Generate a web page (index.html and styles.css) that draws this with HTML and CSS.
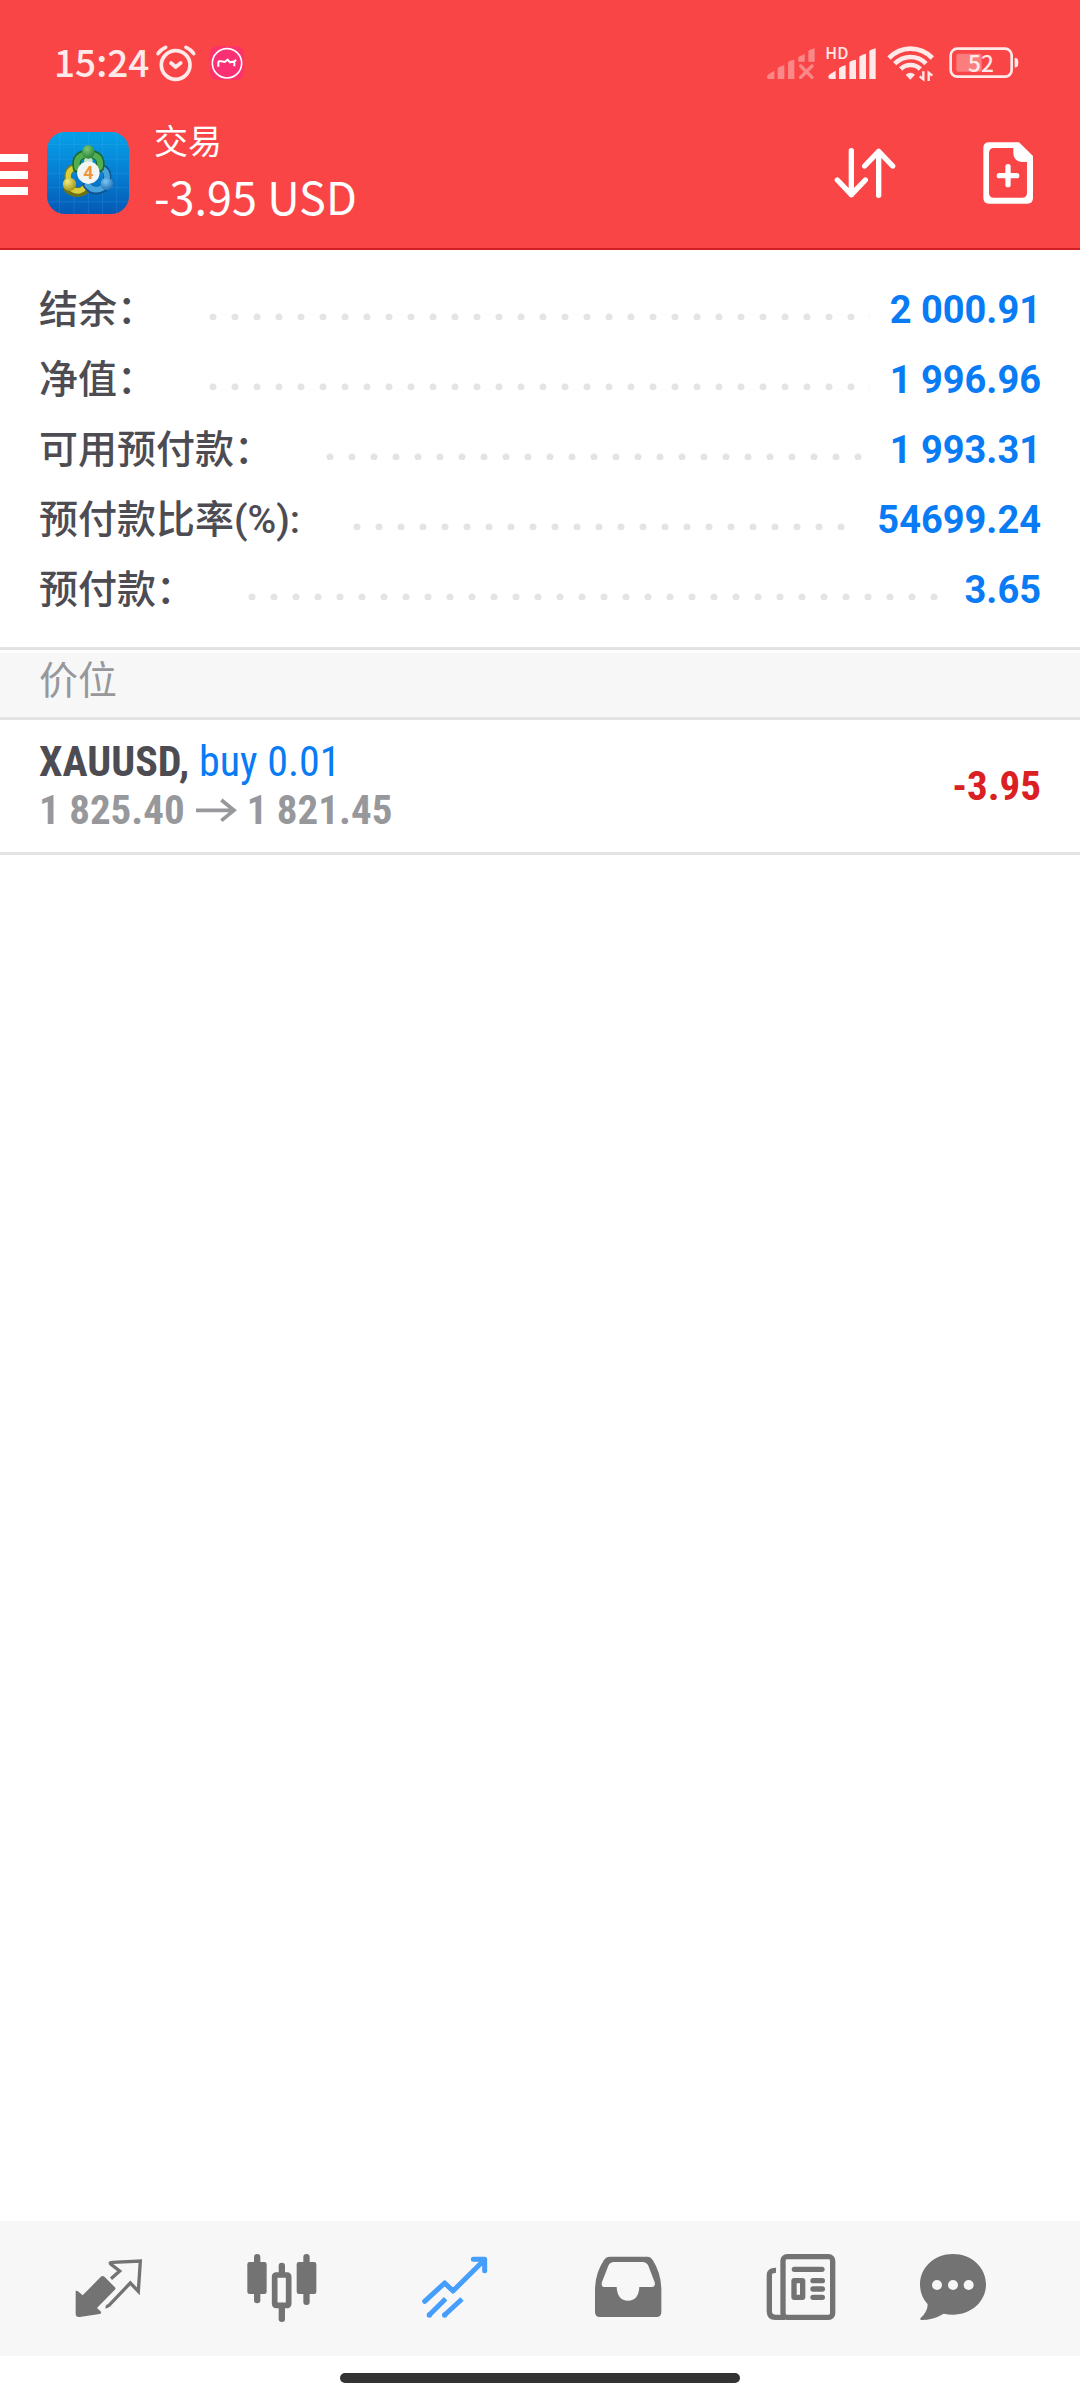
FILE: index.html
```html
<!DOCTYPE html>
<html lang="zh-CN">
<head>
    <meta charset="UTF-8">
    <meta name="viewport" content="width=device-width, initial-scale=1">
    <title>交易</title>
    <link rel="stylesheet" href="styles.css">
</head>
<body>
    <header class="header">
        <!-- 状态栏 -->
        <div class="status-bar">
            <span class="status-time">15:24</span>
            <svg class="status-alarm" viewBox="464 70 126 114" width="42" height="38" fill="none" stroke="#ffe9e9" stroke-width="11" stroke-linecap="round" stroke-linejoin="round">
                <circle cx="526" cy="133" r="43"/>
                <path d="M473 99 Q480 87 496 80M580 99 Q573 87 557 80"/>
                <path d="M512 127 L526 139 L541 127"/>
            </svg>
            <svg class="status-app" viewBox="630 77 102 102" width="34" height="34">
                <rect x="630" y="77" width="102" height="102" rx="22" fill="#fb3368"/>
                <circle cx="681" cy="129" r="44" fill="#fa2f74" stroke="#fff" stroke-width="5"/>
                <path d="M655 139 V126 Q656 121 664 123 L674 125 L683 118 L690 126 L704 123 L708 118 M703 123 V138" fill="none" stroke="#fff" stroke-width="6"/>
            </svg>
            <span class="status-space"></span>
            <div class="status-icons">
                <svg viewBox="82 78 144 102" width="48" height="34" fill="#fff" opacity=".36">
                    <path d="M82 171 Q82 165 88 162 L104 152 V177 H88 Q82 177 82 171ZM114 146 Q115 141 134 136 V177 H114ZM145 128 Q146 122 164 119 V177 H145ZM176 111 L195 102 V125 H176ZM206 94 Q207 90 225 85 V125 H206Z"/>
                    <path d="M183 138 L217 172M217 138 L183 172" stroke="#fff" stroke-width="10" stroke-linecap="round"/>
                </svg>
                <svg viewBox="252 78 156 102" width="52" height="34" fill="#ffe9e9">
                    <text class="hd-text" x="253" y="117">HD</text>
                    <path d="M262 171 Q262 165 268 162 L284 152 V177 H268 Q262 177 262 171ZM294 146 Q295 141 314 136 V177 H294ZM325 128 Q326 122 345 119 V177 H325ZM355 111 Q356 106 375 101 V177 H355ZM385 94 Q386 90 404 85 V177 H385Z"/>
                </svg>
                <svg viewBox="442 76 144 108" width="48" height="36" fill="none" stroke="#ffe9e9" stroke-width="14">
                    <path d="M448 115 Q476 87 512 87 Q550 87 578 115M465 132 Q486 112 512 112 Q540 112 559 132M483 148 Q495 136 512 136 Q530 136 542 148"/>
                    <path d="M498 165 Q512 154 526 165 L512 180Z" fill="#ffe9e9" stroke="none"/>
                    <path d="M551 155 V179 L540 170M567 184 V159 L578 168" stroke-width="7"/>
                </svg>
                <svg class="status-battery" viewBox="625 82 210 96" width="70" height="32">
                    <rect x="630" y="87" width="183" height="84" rx="20" fill="none" stroke="#ffe9e9" stroke-width="8"/>
                    <rect x="647" y="102" width="76" height="54" rx="6" fill="#fff" opacity=".3"/>
                    <path d="M822 114 Q833 114 833 129 Q833 144 822 144Z" fill="#ffe9e9"/>
                    <text class="battery-text" x="721" y="156" text-anchor="middle">52</text>
                </svg>
            </div>
        </div>

        <div class="app-bar">
            <button class="menu-button" type="button" aria-label="菜单">
                <svg viewBox="0 0 28 42" width="28" height="42" fill="#fff">
                    <path d="M0 0H28V8H0ZM0 17H28V25H0ZM0 33H28V41H0Z"/>
                </svg>
            </button>
            <!-- 应用图标 -->
            <svg class="app-logo" viewBox="0 0 248 248" width="82" height="82">
                <defs>
                    <linearGradient id="logo-bg" x1="0" y1="0" x2="0" y2="1">
                        <stop offset="0" stop-color="#06a0e8"/>
                        <stop offset=".5" stop-color="#067fd3"/>
                        <stop offset="1" stop-color="#0558b4"/>
                    </linearGradient>
                    <radialGradient id="logo-green" cx=".4" cy=".3" r=".8">
                        <stop offset="0" stop-color="#7cc975"/>
                        <stop offset="1" stop-color="#1d7a32"/>
                    </radialGradient>
                    <radialGradient id="logo-yellow" cx=".35" cy=".3" r=".8">
                        <stop offset="0" stop-color="#f4ec7c"/>
                        <stop offset="1" stop-color="#968d10"/>
                    </radialGradient>
                    <radialGradient id="logo-blue" cx=".4" cy=".3" r=".8">
                        <stop offset="0" stop-color="#7cc8f4"/>
                        <stop offset="1" stop-color="#1667ae"/>
                    </radialGradient>
                </defs>
                <rect width="248" height="248" rx="54" fill="url(#logo-bg)"/>
                <path d="M38 0V248M82 0V248M125 0V248M168 0V248M211 0V248M0 38H248M0 82H248M0 125H248M0 168H248M0 211H248" stroke="#4fc0ef" stroke-width="2" opacity=".28"/>
                <g fill="none" stroke-linecap="round">
                    <path d="M65 172 Q96 194 122 168" stroke="#6e7217" stroke-width="28"/>
                    <path d="M67 154 Q54 106 92 108" stroke="#7e7a12" stroke-width="22"/>
                    <path d="M67 152 Q55 110 92 108M70 170 Q95 188 114 168" stroke="#d9cf3c" stroke-width="16"/>
                    <path d="M180 154 Q190 112 160 108M120 160 Q140 188 172 170" stroke="#115591" stroke-width="24"/>
                    <path d="M180 152 Q188 115 160 109M122 160 Q142 184 170 168" stroke="#48a4dc" stroke-width="17"/>
                    <path d="M91 110 Q82 67 125 67 Q168 67 160 108" stroke="#166928" stroke-width="26"/>
                    <path d="M91 108 Q84 68 125 68 Q166 68 160 106" stroke="#50ad50" stroke-width="18"/>
                </g>
                <circle cx="125" cy="88" r="13" fill="#c7e6c4"/>
                <ellipse cx="125" cy="60" rx="19" ry="21" fill="url(#logo-green)"/>
                <circle cx="68" cy="158" r="20" fill="url(#logo-yellow)"/>
                <circle cx="181" cy="157" r="19" fill="url(#logo-blue)"/>
                <circle cx="125" cy="123" r="34" fill="#f3f4f4"/>
                <text class="logo-text" x="125" y="142" text-anchor="middle">4</text>
            </svg>
            <div class="app-title">
                <h1 class="title">交易</h1>
                <div class="profit">-3.95 USD</div>
            </div>
            <button class="icon-button" type="button" aria-label="排序">
                <svg viewBox="282 381 186 156" width="62" height="52" fill="none" stroke="#fff" stroke-width="16" stroke-linecap="round" stroke-linejoin="round">
                    <path d="M334 392V524M292 480L334 524L376 480M416 526V394M374 438L416 394L458 438"/>
                </svg>
            </button>
            <button class="icon-button" type="button" aria-label="新订单">
                <svg viewBox="729 366 150 186" width="50" height="62">
                    <path fill="#fff" fill-rule="evenodd" d="M747 367H837L879 408V534Q879 551 862 551H747Q730 551 730 534V384Q730 367 747 367ZM762 384Q747 384 747 400V518Q747 533 762 533H846Q861 533 861 518V426H846Q821 424 820 399V384Z"/>
                    <path d="M804 440V494M778 467H830" stroke="#fff" stroke-width="16" stroke-linecap="round"/>
                </svg>
            </button>
        </div>
    </header>

    <main class="main-content">
        <!-- 账户信息 -->
        <dl class="account">
            <div class="account-row">
                <dt>结余：</dt>
                <dd>2 000.91</dd>
            </div>
            <div class="account-row">
                <dt>净值：</dt>
                <dd>1 996.96</dd>
            </div>
            <div class="account-row">
                <dt>可用预付款：</dt>
                <dd>1 993.31</dd>
            </div>
            <div class="account-row">
                <dt>预付款比率(%):</dt>
                <dd>54699.24</dd>
            </div>
            <div class="account-row">
                <dt>预付款：</dt>
                <dd>3.65</dd>
            </div>
        </dl>

        <!-- 持仓 -->
        <h2 class="section-title">价位</h2>
        <div class="position">
            <div class="position-info">
                <div class="position-symbol"><b>XAUUSD,</b> <span class="buy">buy 0.01</span></div>
                <div class="position-price">
                    <span>1 825.40</span>
                    <svg viewBox="588 500 120 66" width="40" height="22" fill="none" stroke="#97989c" stroke-width="11">
                        <path d="M588 534H702M664 503L702 534L664 565"/>
                    </svg>
                    <span>1 821.45</span>
                </div>
            </div>
            <div class="position-profit">-3.95</div>
        </div>
    </main>

    <!-- 底部导航 -->
    <nav class="tab-bar">
        <button class="tab" type="button" aria-label="行情">
            <svg viewBox="98 126 216 216" width="72" height="72">
                <path d="M106 242L112 243L127 256L181 201Q187 195 193 201L223 231Q228 236 222 241L170 294L182 305Q184 311 178 312L118 321Q106 322 106 312Z" fill="#737373"/>
                <path d="M212 206L238 183L212 163Q206 157 216 157L300 153L294 244L270 219L206 286Q200 291 196 290" fill="none" stroke="#737373" stroke-width="10"/>
            </svg>
        </button>
        <button class="tab" type="button" aria-label="图表">
            <svg viewBox="616 126 216 216" width="72" height="72" fill="#737373">
                <rect x="640" y="132" width="19" height="148" rx="9"/>
                <rect x="620" y="156" width="58" height="96" rx="7"/>
                <rect x="788" y="132" width="19" height="153" rx="9"/>
                <rect x="768" y="156" width="59" height="96" rx="7"/>
                <rect x="714" y="158" width="19" height="40" rx="9"/>
                <rect x="714" y="286" width="19" height="50" rx="9"/>
                <rect x="702" y="195" width="42" height="91" rx="4" fill="none" stroke="#737373" stroke-width="17"/>
            </svg>
        </button>
        <button class="tab" type="button" aria-label="交易">
            <svg viewBox="1135 126 216 216" width="72" height="72" fill="none" stroke="#459dfc" stroke-width="15" stroke-linejoin="round">
                <path d="M1152 274L1212 219L1237 243L1330 151M1298 148H1332V182" stroke-linecap="round"/>
                <path d="M1166 315L1215 266M1212 315L1264 267"/>
                <g fill="#459dfc" stroke="none">
                    <circle cx="1166" cy="315" r="8"/>
                    <circle cx="1212" cy="315" r="8"/>
                </g>
            </svg>
        </button>
        <button class="tab" type="button" aria-label="历史">
            <svg viewBox="154 126 216 216" width="72" height="72">
                <path fill="#737373" fill-rule="evenodd" d="M208 140H320Q330 140 336 150Q362 190 362 240V306Q362 321 347 321H178Q163 321 163 306V240Q163 190 190 150Q196 140 208 140ZM220 156Q208 156 203 167L184 216Q180 231 192 231H228Q230 272 262 272Q294 272 296 231H334Q345 229 342 217L323 167Q317 156 306 156Z"/>
            </svg>
        </button>
        <button class="tab" type="button" aria-label="新闻">
            <svg viewBox="675 126 216 216" width="72" height="72" fill="none" stroke="#737373" stroke-width="16">
                <rect x="729" y="140" width="149" height="182" rx="12"/>
                <path d="M708 181Q688 180 688 196V304Q688 322 706 322H735"/>
                <path d="M763 178H846M819 212H847M819 237H847M819 262H847" stroke-linecap="round"/>
                <rect x="762" y="212" width="26" height="50" rx="1"/>
            </svg>
        </button>
        <button class="tab tab-last" type="button" aria-label="消息">
            <svg viewBox="1131 126 216 216" width="72" height="72">
                <path d="M1239 132C1294 132 1338 172 1338 223C1338 274 1294 314 1239 314Q1224 314 1211 311Q1180 330 1143 330Q1139 328 1142 324Q1163 305 1163 283Q1140 258 1140 223C1140 172 1184 132 1239 132Z" fill="#737373"/>
                <g fill="#f7f7f7">
                    <circle cx="1191" cy="225" r="15"/>
                    <circle cx="1239" cy="225" r="15"/>
                    <circle cx="1286" cy="225" r="15"/>
                </g>
            </svg>
        </button>
    </nav>
    <div class="home-area"><div class="home-line"></div></div>
</body>
</html>
```
FILE: styles.css
```css
body {
    font-family: Roboto, 'Noto Sans CJK SC', sans-serif;
    background-color: #fff;
    margin: 0;
    min-height: 100vh;
    display: flex;
    flex-direction: column;
}

svg {
    display: block;
    flex: none;
    overflow: visible;
}

button {
    background: none;
    border: none;
    padding: 0;
    cursor: pointer;
}

/* 顶部 */
.header {
    background-color: #fa4547;
    border-bottom: 2px solid #d02024;
    color: #fff;
}

.status-bar {
    display: flex;
    align-items: center;
    height: 78px;
    padding: 24px 61px 0 54px;
}

.status-time {
    margin-bottom: 4px;
    font-family: 'Noto Sans CJK SC', sans-serif;
    font-size: 37px;
    font-weight: 500;
    line-height: 40px;
    color: #ffe9e9;
}

.status-alarm {
    margin-left: 6px;
}

.status-app {
    margin-left: 13px;
}

.status-space {
    flex: 1;
}

.status-icons {
    display: flex;
    align-items: center;
    gap: 10px;
}

.status-battery {
    margin-left: 4px;
}

.hd-text {
    font-family: 'Noto Sans CJK SC', sans-serif;
    font-size: 48px;
    font-weight: 500;
}

.battery-text {
    font-family: 'Noto Sans CJK SC', sans-serif;
    font-size: 68px;
    font-weight: 500;
    fill: #ffe9e9;
}

.logo-text {
    font-size: 54px;
    font-weight: 700;
    fill: #f0953c;
}

.app-bar {
    display: flex;
    align-items: center;
    height: 141px;
    padding: 0 47px 5px 0;
}

.menu-button {
    margin-top: 4px;
}

.app-logo {
    margin-left: 19px;
}

.app-title {
    flex: 1;
    margin: 0 0 10px 25px;
    font-family: 'Noto Sans CJK SC', sans-serif;
}

.title {
    font-size: 34px;
    font-weight: 400;
    line-height: 56px;
    margin: 0;
}

.profit {
    font-size: 45px;
    line-height: 56px;
}

.icon-button {
    margin-left: 87px;
}

/* 账户信息 */
.main-content {
    flex: 1;
}

.account {
    margin: 0;
    padding: 25px 39px 22px;
    border-bottom: 3px solid #e3e3e3;
}

.account-row {
    display: flex;
    align-items: center;
    height: 70px;
    font-size: 39px;
    font-weight: 500;
    line-height: 70px;
}

.account-row dt {
    color: #4d4c53;
}

/* 标签和数值之间的圆点 */
.account-row::after {
    content: '';
    order: 1;
    flex: 1;
    height: 7px;
    margin: 12px 20px 0 53px;
    background: radial-gradient(circle at 4px 4px, #e4e4e4 3px, transparent 4px) 0 0 / 22px 7px repeat-x;
}

.account-row dd {
    order: 2;
    margin: 0;
    font-size: 38px;
    font-weight: 700;
    color: #087bf5;
}

/* 持仓 */
.section-title {
    margin: 3px 0 0;
    padding: 0 39px 8px;
    font-size: 39px;
    font-weight: 400;
    line-height: 56px;
    color: #97989c;
    background-color: #f7f7f7;
    border-bottom: 3px solid #e3e3e3;
}

.position {
    display: flex;
    align-items: center;
    justify-content: space-between;
    padding: 18px 39px;
    font-family: 'Roboto Condensed', Roboto, sans-serif;
    font-size: 42px;
    line-height: 48px;
    border-bottom: 3px solid #e3e3e3;
}

.position-symbol {
    color: #4d4c53;
}

.buy {
    color: #087bf5;
}

.position-price {
    display: flex;
    align-items: center;
    gap: 11px;
    font-size: 41px;
    font-weight: 700;
    color: #97989c;
}

.position-profit {
    font-size: 41px;
    font-weight: 700;
    color: #db2023;
}

/* 底部导航 */
.tab-bar {
    display: flex;
    height: 133px;
    padding: 0 61px 2px 22px;
    background-color: #f7f7f7;
}

.tab {
    display: flex;
    align-items: center;
    justify-content: center;
    flex: 173;
}

.tab-last {
    flex: 132;
}

.home-area {
    display: flex;
    justify-content: center;
    align-items: center;
    height: 44px;
}

.home-line {
    width: 37%;
    height: 10px;
    border-radius: 5px;
    background-color: #333;
}
```
